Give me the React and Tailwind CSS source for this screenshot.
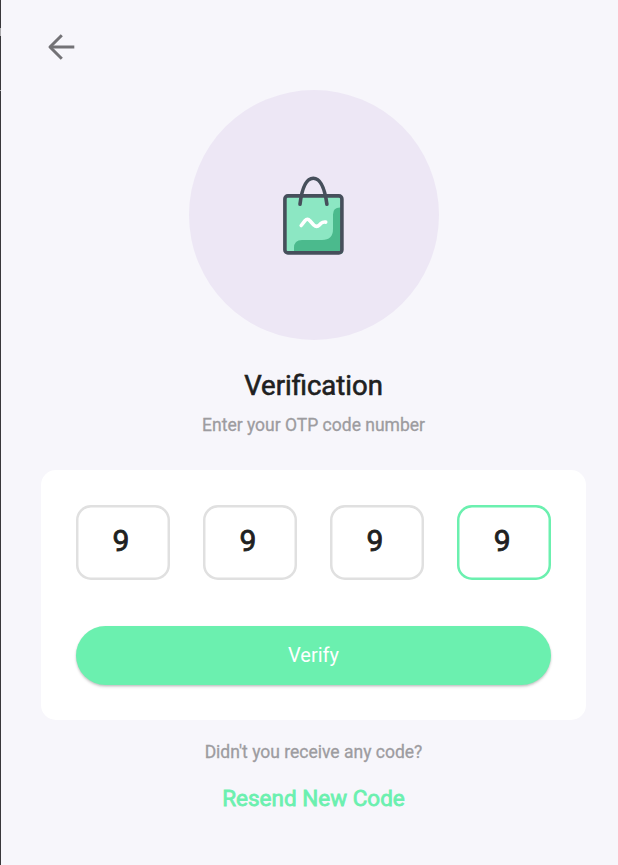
import React from "react";

const digits = ["9", "9", "9", "9"];

function BackArrow() {
  return (
    <svg className="block h-[28px] w-[28px]" viewBox="0 0 28 28" fill="none" stroke="#737276" strokeWidth="3">
      <path d="M27.3 14H3" />
      <path d="M14.8 2.3L3 14l11.8 11.7" strokeLinejoin="round" />
    </svg>
  );
}

function BagIcon() {
  return (
    <svg className="block h-[80px] w-[62px]" viewBox="0 0 62 80" fill="none">
      <rect x="1.8" y="19.8" width="58" height="58" rx="2.5" fill="#8ce7c3" />
      <path d="M60 31.5H57q-7 0-7 7V53q0 11-11 11H19q-8 0-8 8v6h46q3 0 3-3z" fill="#4bba8d" />
      <rect x="1.9" y="19.9" width="57" height="57" rx="3" stroke="#464f5b" strokeWidth="3.6" />
      <path d="M17 28.3C18.7 14 22.7 2.2 30.3 2.2S42 14 43.9 28.3" stroke="#464f5b" strokeWidth="3.6" strokeLinecap="round" />
      <path d="M18.2 49.5L22 44.6Q24.5 41.8 26.9 44.8L30.7 49Q33.7 51.8 36.4 49L38.1 47.3Q39.7 45.8 42.7 46.1" stroke="#fff" strokeWidth="3.6" strokeLinecap="round" strokeLinejoin="round" />
    </svg>
  );
}

function CodeField({ value, active }) {
  return (
    <div
      className={`flex h-[75px] w-[93.75px] items-center justify-center rounded-[15px] pb-[3px] pr-[4px] text-[30px] leading-none text-[#202020] [-webkit-text-stroke:0.8px_#202020] ${
        active ? "shadow-[inset_0_0_0_2.5px_#6bf0af]" : "shadow-[inset_0_0_0_2.5px_#e0e0e0]"
      }`}
    >
      {value}
    </div>
  );
}

export default function App() {
  return (
    <div className="flex h-[865px] w-[618px] overflow-hidden bg-[#f7f6fb] font-[Roboto,sans-serif]">
      <div className="flex w-px shrink-0 flex-col bg-[#39383b]">
        <div className="mt-[28px] h-[8px] bg-[#aaa9ac]" />
        <div className="mt-[54px] h-px bg-[#aaa9ac]" />
      </div>
      <main className="flex flex-1 flex-col items-center pl-[40px] pr-[32px] pt-[33px]">
        <button className="ml-[6px] self-start" aria-label="Back">
          <BackArrow />
        </button>
        <div className="mt-[28.5px] flex h-[250px] w-[250px] shrink-0 items-center justify-center rounded-full bg-[#ede7f5] pt-[2px]">
          <BagIcon />
        </div>
        <h1 className="mt-[30.5px] h-[32px] whitespace-nowrap text-[27.5px] leading-[32px] text-[#202020] [-webkit-text-stroke:0.6px_#202020]">
          Verification
        </h1>
        <p className="mt-[13px] h-[20px] whitespace-nowrap text-[17.5px] leading-[20px] text-[#9d9ca0] [-webkit-text-stroke:0.3px_#9d9ca0]">
          Enter your OTP code number
        </p>
        <section className="mt-[34.5px] flex h-[250px] w-full shrink-0 flex-col rounded-[15px] bg-white px-[35px] pt-[35px]">
          <div className="flex justify-between">
            {digits.map((digit, i) => (
              <CodeField key={i} value={digit} active={i === digits.length - 1} />
            ))}
          </div>
          <button className="mt-[46.5px] h-[58.5px] w-full rounded-full bg-[#6bf0af] text-[20px] text-white shadow-[0_2px_3px_rgba(0,0,0,0.14),0_1px_2px_rgba(0,0,0,0.12)]">
            Verify
          </button>
        </section>
        <p className="mt-[22.5px] h-[20px] whitespace-nowrap text-[17.5px] leading-[20px] text-[#9d9ca0] [-webkit-text-stroke:0.3px_#9d9ca0]">
          Didn't you receive any code?
        </p>
        <button className="mt-[23px] h-[27px] whitespace-nowrap text-[22.5px] leading-[27px] text-[#6bf0af] [-webkit-text-stroke:0.8px_#6bf0af]">
          Resend New Code
        </button>
      </main>
    </div>
  );
}
